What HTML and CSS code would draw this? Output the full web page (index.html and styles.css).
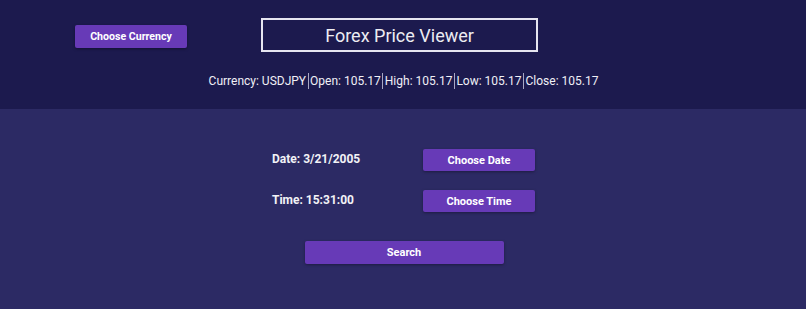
FILE: index.html
```html
<!DOCTYPE html>
<html>
<head>
<meta charset="utf-8">
<link rel="stylesheet" href="styles.css">
</head>
<body>
<header class="header">
  <div class="top-row">
    <button class="btn btn-currency">Choose Currency</button>
    <div class="title">Forex Price Viewer</div>
  </div>
  <div class="info">
    <span class="item">Currency: USDJPY</span><span class="sep"></span><span class="item">Open: 105.17</span><span class="sep"></span><span class="item">High: 105.17</span><span class="sep"></span><span class="item">Low: 105.17</span><span class="sep"></span><span class="item">Close: 105.17</span>
  </div>
</header>
<main class="main">
  <div class="form">
    <div class="row">
      <span class="label">Date: 3/21/2005</span>
      <button class="btn btn-pick">Choose Date</button>
    </div>
    <div class="row">
      <span class="label">Time: 15:31:00</span>
      <button class="btn btn-pick">Choose Time</button>
    </div>
  </div>
  <button class="btn btn-search">Search</button>
</main>
</body>
</html>
```
FILE: styles.css
```css
html, body {
  margin: 0;
  padding: 0;
}
body {
  width: 806px;
  height: 309px;
  background: #2c2a64;
  font-family: Roboto, "Liberation Sans", sans-serif;
  color: #ffffff;
  overflow: hidden;
}
.header {
  background: #1c1a4e;
  height: 109px;
  box-sizing: border-box;
  padding-top: 18px;
}
.top-row {
  display: flex;
  align-items: center;
  padding-left: 75px;
}
.btn {
  background: #673ab7;
  color: #ffffff;
  border: none;
  border-radius: 2px;
  font-family: Roboto, "Liberation Sans", sans-serif;
  font-weight: 700;
  font-size: 11px;
  padding: 0;
  box-shadow: 0 1px 3px rgba(0, 0, 0, 0.35);
}
.btn-currency {
  width: 112px;
  height: 23px;
  margin-top: 3px;
  font-size: 10.6px;
}
.title {
  margin-left: 74px;
  width: 277px;
  height: 34px;
  box-sizing: border-box;
  border: 2px solid #e6e6f0;
  display: flex;
  align-items: center;
  justify-content: center;
  font-size: 18px;
  color: #ececf2;
}
.info {
  display: flex;
  justify-content: center;
  align-items: center;
  margin-top: 21px;
  font-size: 12px;
  color: #f0f0f6;
  padding-left: 1px;
}
.sep {
  display: inline-block;
  width: 1px;
  height: 16px;
  background: #a9a8c4;
  margin: 0 1.5px;
}
.main {
  display: flex;
  flex-direction: column;
  align-items: center;
  padding-top: 40px;
}
.form {
  width: 263px;
  margin-left: 1px;
  display: flex;
  flex-direction: column;
  gap: 19px;
}
.row {
  display: flex;
  justify-content: space-between;
  align-items: center;
}
.label {
  font-size: 12px;
  font-weight: 700;
  color: #f2f2f6;
  margin-top: -3px;
}
.btn-pick {
  width: 112px;
  height: 22px;
}
.btn-search {
  margin-top: 29px;
  width: 199px;
  height: 23px;
  margin-left: 2px;
}
```
